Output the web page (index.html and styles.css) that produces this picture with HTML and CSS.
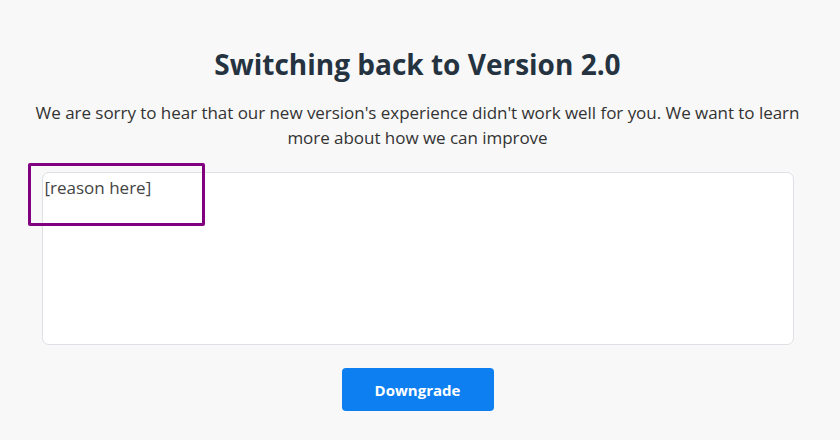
FILE: index.html
```html
<!DOCTYPE html>
<html>
<head>
<meta charset="utf-8">
<link rel="stylesheet" href="styles.css">
</head>
<body>
<main class="page">
  <h1 class="title">Switching back to Version 2.0</h1>
  <p class="lead">We are sorry to hear that our new version's experience didn't work well for you. We want to learn more about how we can improve</p>
  <div class="field">
    <div class="reason">[reason here]</div>
    <div class="highlight"></div>
  </div>
  <div class="actions">
    <button class="btn">Downgrade</button>
  </div>
</main>
</body>
</html>
```

FILE: styles.css
```css
html, body {
  margin: 0;
  padding: 0;
  background: #f8f8f8;
  font-family: "Open Sans", "Liberation Sans", sans-serif;
}
.page {
  width: 835px;
  height: 440px;
  box-sizing: border-box;
  padding-top: 45px;
  display: flex;
  flex-direction: column;
  align-items: center;
}
.title {
  margin: 0;
  font-size: 28px;
  font-weight: 700;
  color: #253341;
  line-height: 38px;
}
.lead {
  margin: 17px 0 0;
  width: 790px;
  text-align: center;
  font-size: 17px;
  line-height: 25px;
  letter-spacing: -0.04px;
  color: #333;
}
.field {
  position: relative;
  margin-top: 22px;
  width: 752px;
  height: 173px;
  box-sizing: border-box;
  background: #fff;
  border: 1px solid #dde0e5;
  border-radius: 7px;
  padding: 3px 2px;
}
.reason {
  font-size: 17px;
  line-height: 24px;
  color: #444;
}
.highlight {
  position: absolute;
  left: -15px;
  top: -10px;
  width: 177px;
  height: 63px;
  box-sizing: border-box;
  border: 3px solid #800080;
  border-radius: 2px;
}
.actions {
  margin-top: 23px;
}
.btn {
  width: 152px;
  height: 43px;
  border: none;
  border-radius: 4px;
  background: #0d7ff0;
  color: #fff;
  font-family: "Open Sans", "Liberation Sans", sans-serif;
  font-weight: 700;
  font-size: 15px;
}
```
